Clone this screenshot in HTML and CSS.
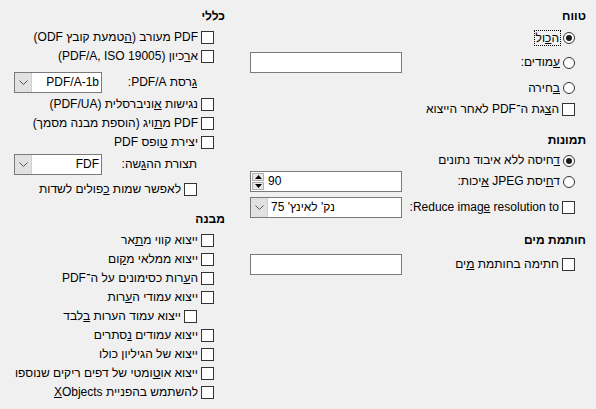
FILE: index.html
```html
<!DOCTYPE html>
<html lang="he" dir="rtl">
<head>
<meta charset="utf-8">
<title>PDF</title>
<link rel="stylesheet" href="styles.css">
</head>
<body>
<div class="dialog">
  <div class="col col-right">
    <div class="heading">טווח</div>
    <div class="row h20 mt2"><span class="radio on"></span><span class="label"><span class="focus">ה<u>כ</u>ול</span></span></div>
    <div class="row h21 mt4"><span class="radio"></span><span class="label"><u>ע</u>מודים:</span><span class="field"></span></div>
    <div class="row h20 mt5"><span class="radio"></span><span class="label"><u>ב</u>חירה</span></div>
    <div class="row h20 mt1"><span class="check"></span><span class="label">ה<u>צ</u>גת ה־PDF לאחר הייצוא</span></div>

    <div class="heading mt11">תמונות</div>
    <div class="row h19 mt1"><span class="radio on"></span><span class="label"><u>ד</u>חיסה ללא איבוד נתונים</span></div>
    <div class="row h21 mt1"><span class="radio"></span><span class="label">ד<u>ח</u>יסת JPEG <u>א</u>יכות:</span>
      <span class="field spin"><span class="spin-btns"><span class="sb"><svg width="7" height="4" viewBox="0 0 7 4"><polygon points="0,4 7,4 3.5,0" fill="#000"/></svg></span><span class="sb"><svg width="7" height="4" viewBox="0 0 7 4"><polygon points="0,0 7,0 3.5,4" fill="#000"/></svg></span></span><span class="spin-val">90</span></span>
    </div>
    <div class="row h21 mt5"><span class="check"></span><span class="label ltr-label">Reduce imag<u>e</u> resolution to:</span>
      <span class="field combo combo-left"><span class="drop"><svg width="9" height="5" viewBox="0 0 9 5"><polyline points="0.5,0.5 4.5,4.5 8.5,0.5" fill="none" stroke="#555" stroke-width="1"/></svg></span><span class="combo-val">נק' לאינץ' 75</span></span>
    </div>

    <div class="heading mt12">חותמת מים</div>
    <div class="row h21 mt4"><span class="check"></span><span class="label">חתימה בחותמת <u>מ</u>ים</span><span class="field"></span></div>
  </div>

  <div class="col col-left">
    <div class="heading">כללי</div>
    <div class="row h19 mt2"><span class="check"></span><span class="label">PDF מעורב (<u>ה</u>טמעת קובץ ODF)</span></div>
    <div class="row h19"><span class="check"></span><span class="label">א<u>ר</u>כיון (PDF/A, ISO 19005)</span></div>
    <div class="row h21 mt6 sub"><span class="label"><u>ג</u>רסת PDF/A:</span>
      <span class="combo small"><span class="drop"><svg width="9" height="5" viewBox="0 0 9 5"><polyline points="0.5,0.5 4.5,4.5 8.5,0.5" fill="none" stroke="#555" stroke-width="1"/></svg></span><span class="combo-val right">PDF/A-1b</span></span>
    </div>
    <div class="row h19 mt2"><span class="check"></span><span class="label">נגישות <u>א</u>וניברסלית (PDF/UA)</span></div>
    <div class="row h19"><span class="check"></span><span class="label">PDF מ<u>ת</u>ויג (הוספת מבנה מסמך)</span></div>
    <div class="row h19"><span class="check"></span><span class="label">יצירת <u>ט</u>ופס PDF</span></div>
    <div class="row h21 mt2 sub"><span class="label">תצורת הה<u>ג</u>שה:</span>
      <span class="combo small"><span class="drop"><svg width="9" height="5" viewBox="0 0 9 5"><polyline points="0.5,0.5 4.5,4.5 8.5,0.5" fill="none" stroke="#555" stroke-width="1"/></svg></span><span class="combo-val right">FDF</span></span>
    </div>
    <div class="row h19 mt5 sub"><span class="check"></span><span class="label">לאפשר שמות <u>כ</u>פולים לשדות</span></div>

    <div class="heading mt10">מבנה</div>
    <div class="row h19 mt2"><span class="check"></span><span class="label">ייצוא קווי מ<u>ת</u>אר</span></div>
    <div class="row h19"><span class="check"></span><span class="label">ייצוא ממלאי מ<u>ק</u>ום</span></div>
    <div class="row h19"><span class="check"></span><span class="label">ה<u>ע</u>רות כסימונים על ה־PDF</span></div>
    <div class="row h19"><span class="check"></span><span class="label">ייצוא עמודי ה<u>ע</u>רות</span></div>
    <div class="row h19 sub"><span class="check"></span><span class="label">ייצוא עמוד הערות <u>ב</u>לבד</span></div>
    <div class="row h19"><span class="check"></span><span class="label">ייצוא עמודים <u>נ</u>סתרים</span></div>
    <div class="row h19"><span class="check"></span><span class="label">ייצוא של הגיליון כולו</span></div>
    <div class="row h19"><span class="check"></span><span class="label">ייצוא או<u>ט</u>ומטי של דפים ריקים שנוספו</span></div>
    <div class="row h19"><span class="check"></span><span class="label">להשתמש בהפניית <u>X</u>Objects</span></div>
  </div>
</div>
</body>
</html>
```

FILE: styles.css
```css
html, body {
  margin: 0;
  padding: 0;
  background: #f0f0f0;
}
body {
  width: 596px;
  height: 409px;
  overflow: hidden;
  font-family: "Liberation Sans", "DejaVu Sans", sans-serif;
  font-size: 12px;
  color: #000;
  direction: rtl;
}
.dialog {
  display: flex;
  flex-direction: row;
  gap: 15px;
  height: 409px;
}
.col {
  display: flex;
  flex-direction: column;
  box-sizing: border-box;
}
.col-right { width: 346px; }
.col-left { width: 235px; padding-left: 14px; }

.heading {
  height: 20px;
  line-height: 20px;
  margin-top: 6px;
  padding-right: 10px;
  font-weight: bold;
}
.heading.mt10 { margin-top: 10px; }
.heading.mt11 { margin-top: 11px; }
.heading.mt12 { margin-top: 12px; }

.row {
  display: flex;
  align-items: center;
  padding-right: 21px;
  box-sizing: border-box;
  white-space: nowrap;
}
.row.sub { padding-right: 38px; }
.h19 { height: 19px; }
.h20 { height: 20px; }
.h21 { height: 21px; }
.mt1 { margin-top: 1px; }
.mt2 { margin-top: 2px; }
.mt4 { margin-top: 4px; }
.mt5 { margin-top: 5px; }
.mt6 { margin-top: 6px; }

.label {
  flex: 1;
  padding-right: 3px;
  line-height: 15px;
}
.row.sub > .label:first-child { padding-right: 0; }
u { text-underline-offset: 1px; }

.focus {
  outline: 1px dotted #000;
  outline-offset: 0;
  padding: 0 1px;
}

.check {
  width: 13px;
  height: 13px;
  box-sizing: border-box;
  border: 1px solid #333;
  background: #fff;
  flex: none;
}
.radio {
  width: 12px;
  height: 12px;
  box-sizing: border-box;
  border: 1px solid #333;
  border-radius: 50%;
  background: #fff;
  flex: none;
  position: relative;
}
.radio.on::after {
  content: "";
  position: absolute;
  left: 2px;
  top: 2px;
  width: 6px;
  height: 6px;
  border-radius: 50%;
  background: #1a1a1a;
}

.field {
  width: 152px;
  height: 21px;
  box-sizing: border-box;
  border: 1px solid #7a7a7a;
  background: #fff;
  flex: none;
}
.spin, .combo {
  display: flex;
  direction: ltr;
  align-items: stretch;
}
.spin-btns {
  display: flex;
  flex-direction: column;
  padding: 1px;
  gap: 1px;
  width: 12px;
}
.sb {
  flex: 1;
  background: #e8e8e8;
  border: 1px solid #b0b0b0;
  display: flex;
  align-items: center;
  justify-content: center;
}
.spin-val {
  padding-left: 3px;
  line-height: 19px;
}
.combo.small {
  width: 88px;
  height: 21px;
  box-sizing: border-box;
  border: 1px solid #7a7a7a;
  background: #fff;
  flex: none;
}
.drop {
  width: 16px;
  background: #e1e1e1;
  border-right: 1px solid #cfcfcf;
  display: flex;
  align-items: center;
  justify-content: center;
  flex: none;
}
.combo-val {
  flex: 1;
  line-height: 19px;
  padding-left: 3px;
  direction: rtl;
  text-align: left;
}
.combo-val.right {
  text-align: right;
  padding-left: 0;
  padding-right: 2px;
  direction: ltr;
}
```
